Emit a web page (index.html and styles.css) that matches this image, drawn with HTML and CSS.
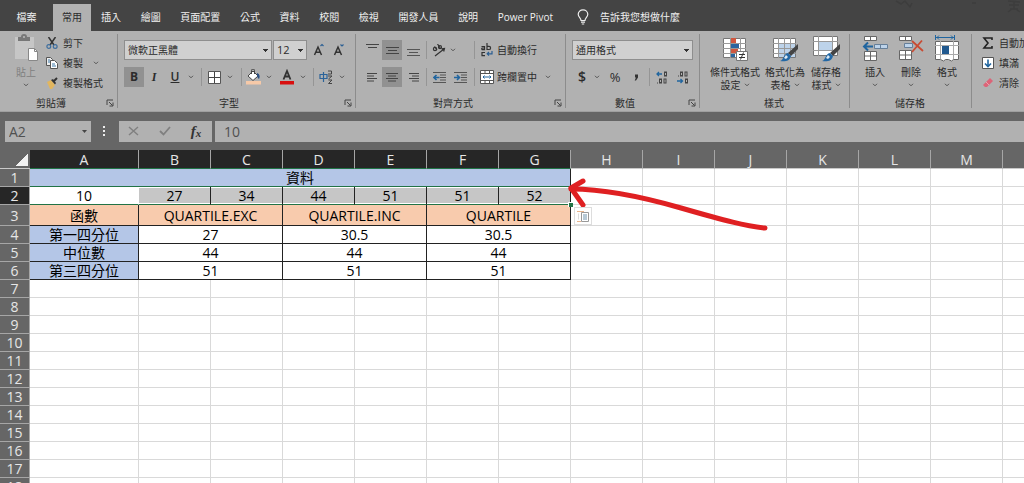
FILE: index.html
```html
<!DOCTYPE html>
<html lang="zh-Hant">
<head>
<meta charset="utf-8">
<title>Excel</title>
<link rel="stylesheet" href="styles.css">
</head>
<body>
<svg width="0" height="0" class="defs" aria-hidden="true">
  <symbol id="chev" viewBox="0 0 6 4"><path d="M1 .8 3 2.8 5 .8" fill="none" stroke="#555" stroke-width="1"/></symbol>
  <symbol id="launch" viewBox="0 0 8 8"><path d="M1 6V1h6M3 3l3.500 3.500M7 3.500V7H3.500" fill="none" stroke="#444" stroke-width="1"/></symbol>
</svg>
<header class="tabs">
  <button class="tab file">檔案</button>
  <button class="tab active">常用</button>
  <nav class="tablist">
    <button class="tab">插入</button><button class="tab">繪圖</button><button class="tab">頁面配置</button><button class="tab">公式</button><button class="tab">資料</button><button class="tab">校閱</button><button class="tab">檢視</button><button class="tab">開發人員</button><button class="tab">說明</button><button class="tab">Power Pivot</button>
  </nav>
  <button class="tab tell"><svg width="12" height="16" viewBox="0 0 12 16" fill="none" stroke="#eee" stroke-width="1.200"><path d="M4 11.500C4 9 1.200 8.300 1.200 5.300a4.800 4.500 0 0 1 9.600 0C10.800 8.300 8 9 8 11.500zM4 13.200h4M4.800 15h2.400"/></svg><span>告訴我您想做什麼</span></button>
  <svg class="deco" width="130" height="14" viewBox="0 0 130 14" fill="none" stroke="#3d3d3d" stroke-width="1.500"><path d="M2 1l5 3 4-3 5 6 2-4M78 3h4M114 1l12 1M115 5h10M116 9h8M120 1v8M114 12l4-3M126 12l-4-3"/></svg>
</header>

<main class="ribbon">
  <section class="group g-clip">
    <div class="body clip">
      <button class="big dim">
        <svg width="26" height="28" viewBox="0 0 26 28"><path d="M2 3h19v22H2z" fill="#c6c6c6"/><path d="M5 3h3a3 3 0 0 1 6 0h3v4H5z" fill="#777"/><circle cx="11" cy="3" r="1" fill="#bbb"/><path d="M15.500 14.500h6l3 3v9h-9z" fill="#fff" stroke="#888"/><path d="M21.500 14.500v3h3" fill="none" stroke="#888"/></svg>
        <span>貼上</span><svg width="6" height="4"><use href="#chev"/></svg>
      </button>
      <div class="stack">
        <button class="line"><svg width="12" height="12" viewBox="0 0 12 12" fill="none"><path d="M2.500 0 8 8M9.500 0 4 8" stroke="#333" stroke-width="1.500"/><circle cx="2.800" cy="9.500" r="1.900" stroke="#3f6f9f" stroke-width="1.200"/><circle cx="9.200" cy="9.500" r="1.900" stroke="#3f6f9f" stroke-width="1.200"/></svg>剪下</button>
        <button class="line"><svg width="12" height="12" viewBox="0 0 12 12"><path d="M.5.500h4l2 2v6h-6z" fill="#eee" stroke="#555"/><path d="M4.500 3.500h4l3 3v5h-7z" fill="#fff" stroke="#555"/><path d="M6 7h3M6 9h4M2 3h2M2 5h2" stroke="#3d78a8"/></svg>複製<svg class="far" width="6" height="4"><use href="#chev"/></svg></button>
        <button class="line"><svg width="12" height="12" viewBox="0 0 12 12"><path d="M1 5l4-2 4 5-3 4H4z" fill="#e2b65e"/><path d="M5 3l2-1 3 4-1 1.500z" fill="#333"/><path d="M8 4l3-3" stroke="#333" stroke-width="2"/></svg>複製格式</button>
      </div>
    </div>
    <footer><span>剪貼簿</span><svg width="8" height="8"><use href="#launch"/></svg></footer>
  </section>

  <section class="group g-font">
    <div class="body rows">
      <div class="row font1">
        <select class="box" aria-label="字型"><option>微軟正黑體</option></select>
        <select class="box" aria-label="大小"><option>12</option></select>
        <button class="tool letter" aria-label="放大字型"><svg width="12" height="14" viewBox="0 0 12 14" fill="none"><path d="M1.500 12 5 4l3.500 8M2.800 9.300h4.400" stroke="#333" stroke-width="1.500"/><path d="M7.500 3 9 1.500 10.500 3" stroke="#2b5f93" stroke-width="1.200"/></svg></button>
        <button class="tool letter" aria-label="縮小字型"><svg width="12" height="14" viewBox="0 0 12 14" fill="none"><path d="M1.500 12 5 4l3.500 8M2.800 9.300h4.400" stroke="#333" stroke-width="1.500"/><path d="M7.500 1.500 9 3l1.500-1.500" stroke="#2b5f93" stroke-width="1.200"/></svg></button>
      </div>
      <div class="row font2">
        <button class="tool on b">B</button><button class="tool i">I</button><button class="tool u">U</button>
        <svg width="6" height="4"><use href="#chev"/></svg><i class="sep"></i>
        <svg width="13" height="13" viewBox="0 0 13 13"><path d="M.5.500h12v12H.5z" fill="#fff" stroke="#555"/><path d="M6.500 1v11M1 6.500h11" stroke="#444"/></svg>
        <svg width="6" height="4"><use href="#chev"/></svg><i class="sep"></i>
        <svg width="15" height="16" viewBox="0 0 15 16"><path d="M2 7l5-5 5 5-5 4.500z" fill="#fff" stroke="#444"/><path d="M5.500 5V1.500a1.500 1.500 0 0 1 3 0V5" fill="none" stroke="#444"/><path d="M11 4c3 1 3 4 2 6-2-1-2-4-2-6" fill="#2b4f83"/><path d="M0 12h15v3.500H0z" fill="#f6c9a8"/></svg>
        <svg width="6" height="4"><use href="#chev"/></svg>
        <svg width="14" height="16" viewBox="0 0 14 16"><path d="M3.500 10.500 7 2l3.500 8.500M5 7.500h4" stroke="#333" stroke-width="1.800" fill="none"/><path d="M0 12h14v3.500H0z" fill="#d80f0f"/></svg>
        <svg width="6" height="4"><use href="#chev"/></svg><i class="sep"></i>
        <svg width="14" height="14" viewBox="0 0 14 14" fill="none"><path d="M1 4.500h7v4H1zM4.500 2v10" stroke="#2b6399" stroke-width="1.200"/><path d="M9 1h3.500v3H9M9 6h4L9.500 9M9.500 10H13l-3.500 3.500H13" stroke="#444"/></svg>
        <svg width="6" height="4"><use href="#chev"/></svg>
      </div>
    </div>
    <footer><span>字型</span><svg width="8" height="8"><use href="#launch"/></svg></footer>
  </section>

  <section class="group g-align">
    <div class="body rows">
      <div class="row align">
        <button class="tool" aria-label="靠上"><svg width="13" height="14" viewBox="0 0 13 14"><path d="M0 1.500h13M2 4.500h9" stroke="#444"/></svg></button>
        <button class="tool on" aria-label="置中"><svg width="13" height="14" viewBox="0 0 13 14"><path d="M0 4.500h13M2 7.500h9M0 10.500h13" stroke="#444"/></svg></button>
        <button class="tool" aria-label="靠下"><svg width="13" height="14" viewBox="0 0 13 14"><path d="M0 6.500h13M2 9.500h9M0 12.500h13" stroke="#555"/></svg></button>
        <i class="sep"></i>
        <svg width="14" height="13" viewBox="0 0 14 13" fill="none" stroke="#333" stroke-width="1.200"><circle cx="3" cy="5" r="1.600"/><path d="M2.500 2.500 5 6M5.500 0l3 4.500"/><circle cx="8" cy="3.200" r="1.500"/><path d="M3 12 12 5M9.500 4.800l3-.3-.8 3"/></svg>
        <svg class="start" width="6" height="4"><use href="#chev"/></svg>
        <i class="sep"></i>
        <svg width="14" height="14" viewBox="0 0 14 14" fill="none" stroke="#333" stroke-width="1.200"><path d="M1.500 3.500h3v3.200H2.200a1 1 0 0 1 0-1.700h2.300M7 0v6.500h2a1.500 1.500 0 0 0 0-3.200H7M5 9.500H2v3.200h3"/><path d="M12 8v2.800H7.500M9 9l-1.800 1.800L9 12.600" stroke="#2b5f93"/></svg>
        <span>自動換行</span>
      </div>
      <div class="row align">
        <button class="tool" aria-label="靠左"><svg width="11" height="9" viewBox="0 0 11 9"><path d="M0 .5h10M0 3h7M0 5.500h10M0 8h7" stroke="#444"/></svg></button>
        <button class="tool on" aria-label="水平置中"><svg width="12" height="9" viewBox="0 0 12 9"><path d="M0 .5h12M2 3h8M0 5.500h12M2 8h8" stroke="#444"/></svg></button>
        <button class="tool" aria-label="靠右"><svg width="11" height="9" viewBox="0 0 11 9"><path d="M1 .5h10M4 3h7M1 5.500h10M4 8h7" stroke="#444"/></svg></button>
        <i class="sep"></i>
        <svg width="13" height="11" viewBox="0 0 13 11"><path d="M0 .5h13M7 3h6M7 5.500h6M7 8h6M0 10.500h13" stroke="#555"/><path d="M6.500 5.500H1M3.500 3 1 5.500 3.500 8" stroke="#20659f" stroke-width="1.600" fill="none"/></svg>
        <svg width="13" height="11" viewBox="0 0 13 11"><path d="M0 .5h13M7 3h6M7 5.500h6M7 8h6M0 10.500h13" stroke="#555"/><path d="M0 5.500h5.500M3 3l2.500 2.500L3 8" stroke="#20659f" stroke-width="1.600" fill="none"/></svg>
        <i class="sep"></i>
        <svg width="14" height="14" viewBox="0 0 14 14"><path d="M.5.500h13v13H.5z" fill="#fff" stroke="#555"/><path d="M0 3.500h14M0 10.500h14M5 0v3.500M9.500 0v3.500M5 10.500V14M9.500 10.500V14" stroke="#555"/><path d="M3 7h8M4.500 5.500 3 7l1.500 1.500M9.500 5.500 11 7 9.500 8.500" fill="none" stroke="#20659f"/></svg>
        <span>跨欄置中</span><svg width="6" height="4"><use href="#chev"/></svg>
      </div>
    </div>
    <footer><span>對齊方式</span><svg width="8" height="8"><use href="#launch"/></svg></footer>
  </section>

  <section class="group g-num">
    <div class="body rows">
      <div class="row"><select class="box wide" aria-label="數值格式"><option>通用格式</option></select></div>
      <div class="row num2">
        <button class="tool sym strong">$</button><svg width="6" height="4"><use href="#chev"/></svg><button class="tool sym">%</button>
        <svg width="5" height="7" viewBox="0 0 5 7"><path d="M1 .5h3v3L2 6.500H.7L2 3.500H1z" fill="#333"/></svg>
        <i class="sep"></i>
        <svg width="12" height="13" viewBox="0 0 12 13" fill="none" stroke="#444"><rect x="8.500" y="1" width="2" height="4"/><path d="M1.500 11.500v1"/><rect x="3.500" y="8" width="2" height="4"/><rect x="8" y="8" width="2" height="4"/><path d="M6 3H1M3 1 1 3l2 2" stroke="#20659f" stroke-width="1.300"/></svg>
        <svg width="12" height="13" viewBox="0 0 12 13" fill="none" stroke="#444"><path d="M1.500 4.500v1"/><rect x="3.500" y="1" width="2" height="4"/><rect x="8" y="1" width="2" height="4"/><rect x="8.500" y="8" width="2" height="4"/><path d="M0 10h5M3.500 8l2 2-2 2" stroke="#20659f" stroke-width="1.300"/></svg>
      </div>
    </div>
    <footer><span>數值</span><svg width="8" height="8"><use href="#launch"/></svg></footer>
  </section>

  <section class="group g-style">
    <div class="body bigs">
      <button class="big">
        <svg width="26" height="28" viewBox="0 0 26 28"><path d="M1.500 4.500h22v19h-22z" fill="#fff" stroke="#777"/><path d="M1 9.500h23M1 14.500h23M1 19.500h23M8.500 4v20M18.500 4v20" stroke="#999"/><path d="M9 4h5v5H9zM9 15h7v4H9z" fill="#d0573f"/><path d="M9 10h8v4H9zM9 20h4v3H9z" fill="#2b659f"/><path d="M14.500 17.500h11v9h-11z" fill="#fff" stroke="#777"/><path d="M17 20.500h6M17 23.500h6M21.500 18.500l-3 7" stroke="#333"/></svg>
        <span>條件式格式</span><span>設定 <svg width="6" height="4"><use href="#chev"/></svg></span>
      </button>
      <button class="big">
        <svg width="26" height="28" viewBox="0 0 26 28"><path d="M1.500 4.500h22v19h-22z" fill="#fff" stroke="#777"/><path d="M7 9h16v14H7z" fill="#bdd3ea"/><path d="M1 9.500h23M1 14.500h23M1 19.500h23M6.500 4v20M12.500 4v20M18.500 4v20" stroke="#999"/><path d="M26 10v5l-7 7-3-3z" fill="#444"/><path d="M16 19l3 3c-1 5-6 6-11 5 4-1 3-7 8-8" fill="#2368a5"/><path d="M14 21l2 2-2 2-2-1z" fill="#dceaf5"/></svg>
        <span>格式化為</span><span>表格 <svg width="6" height="4"><use href="#chev"/></svg></span>
      </button>
      <button class="big">
        <svg width="28" height="28" viewBox="0 0 28 28"><path d="M1.500 2.500h24v19h-24z" fill="#fff" stroke="#777"/><path d="M1 7.500h25M1 16.500h25M6.500 2v20M20.500 2v20" stroke="#999"/><path d="M7 8h13v8H7z" fill="#bdd3ea"/><path d="M28 10v5l-7 7-3-3z" fill="#444"/><path d="M18 19l3 3c-1 5-6 6-11 5 4-1 3-7 8-8" fill="#2368a5"/><path d="M16 21l2 2-2 2-2-1z" fill="#dceaf5"/></svg>
        <span>儲存格</span><span>樣式 <svg width="6" height="4"><use href="#chev"/></svg></span>
      </button>
    </div>
    <footer><span>樣式</span></footer>
  </section>

  <section class="group g-cells">
    <div class="body bigs">
      <button class="big">
        <svg width="26" height="28" viewBox="0 0 26 28"><g fill="#fff" stroke="#666"><path d="M2.500 2.500h12v4h-12zM8.500 2.500v4M2.500 17.500h12v9h-12zM2.500 22h12M8.500 17.500v9"/></g><path d="M12.500 10.500h13v4h-13zM18.500 10.500v4" fill="#bdd3ea" stroke="#667f99"/><path d="M11 12.500H2M6 8.500l-4 4 4 4" fill="none" stroke="#20659f" stroke-width="2"/></svg>
        <span>插入</span><svg width="6" height="4"><use href="#chev"/></svg>
      </button>
      <button class="big">
        <svg width="26" height="28" viewBox="0 0 26 28"><g fill="#fff" stroke="#666"><path d="M1.500 2.500h12v4h-12zM7.500 2.500v4M1.500 16.500h12v9h-12zM1.500 21h12M7.500 16.500v9"/></g><path d="M6.500 9.500h8v4h-8z" fill="#bdd3ea" stroke="#667f99"/><path d="M14 7l11 10M24 6.500 14 18" stroke="#c94b33" stroke-width="1.800"/></svg>
        <span>刪除</span><svg width="6" height="4"><use href="#chev"/></svg>
      </button>
      <button class="big">
        <svg width="26" height="28" viewBox="0 0 26 28"><path d="M1.500 7.500h23v18h-5l-2 1.500-3-1.500h-3l-2 1.500-3-1.500h-5z" fill="#fff" stroke="#666"/><path d="M1 11.500h24M1 20.500h24M6.500 7v18M19.500 7v18" stroke="#aaa"/><path d="M8 12h7v8H8z" fill="#20598f"/><path d="M2 3.500h18M5 1.500l-2 2 2 2M17 1.500l2 2-2 2M1.500 1v5M20.500 1v5" fill="none" stroke="#20659f"/></svg>
        <span>格式</span><svg width="6" height="4"><use href="#chev"/></svg>
      </button>
    </div>
    <footer><span>儲存格</span></footer>
  </section>

  <section class="group g-edit">
    <div class="body stack">
      <button class="line"><svg width="12" height="12" viewBox="0 0 12 12"><path d="M10 3V1H2l4 5-4 5h8V9" fill="none" stroke="#222" stroke-width="1.600"/></svg>自動加總</button>
      <button class="line"><svg width="12" height="12" viewBox="0 0 12 12"><path d="M.5.500h11v11H.5z" fill="#fff" stroke="#555"/><path d="M6 2.500v7M3 6.500l3 3 3-3" fill="none" stroke="#20659f" stroke-width="1.600"/></svg>填滿<svg width="6" height="4"><use href="#chev"/></svg></button>
      <button class="line"><svg width="12" height="12" viewBox="0 0 12 12"><path d="M8 1l3 3-6 6H3L1 8z" fill="#dc6478"/><path d="M4 5l3 3" stroke="#f0a0ac"/></svg>清除<svg width="6" height="4"><use href="#chev"/></svg></button>
    </div>
  </section>
</main>

<div class="formula">
  <div class="namebox"><input aria-label="名稱方塊" value="A2"><svg width="5" height="3" viewBox="0 0 5 3"><path d="M0 0h5L2.500 3z" fill="#444"/></svg></div>
  <svg class="dots" width="3" height="10" viewBox="0 0 3 10" fill="#eee"><path d="M0 0h2v2H0zM0 4h2v2H0zM0 8h2v2H0z"/></svg>
  <div class="fxbox">
    <button class="tool" aria-label="取消"><svg width="11" height="10" viewBox="0 0 11 10"><path d="M1 1l9 8M10 1 1 9" stroke="#808080" stroke-width="1.500"/></svg></button>
    <button class="tool" aria-label="輸入"><svg width="12" height="10" viewBox="0 0 12 10"><path d="M1 5l3.500 3.500L11 1" fill="none" stroke="#808080" stroke-width="1.800"/></svg></button>
    <button class="tool fx"><i>f</i><sub>x</sub></button>
  </div>
  <input class="finput" aria-label="資料編輯列" value="10">
</div>

<div class="sheet">
  <table id="grid"></table>
  <svg class="ink" width="204" height="60" viewBox="0 0 204 60" fill="none" stroke="#df2022" stroke-width="5" stroke-linecap="round" stroke-linejoin="round"><path d="M5 14C35 14 70 20 115 33S180 51 199 53"/><path d="M17 6 5 13l12 17"/></svg>
  <i class="handle"></i>
  <button class="smart" aria-label="快速分析"><svg width="12" height="12" viewBox="0 0 12 12" fill="none"><path d="M4.500 2.500h7v9h-7z" fill="#fff" stroke="#999"/><path d="M6 5h4M6 7h4M6 9h4" stroke="#6f93ad"/><path d="M0 1.500h7M0 11.500h4" stroke="#e8b48c"/><path d="M1.500 3.500v6" stroke="#ddd"/></svg></button>
</div>
<script src="app.js"></script>
</body>
</html>
```

FILE: styles.css
```css
* { box-sizing: border-box; }
body {
  margin: 0;
  height: 100vh;
  overflow: hidden;
  display: flex;
  flex-direction: column;
  background: #666;
  color: #2b2b2b;
  font: 10px/12px "Open Sans", "Noto Sans CJK TC", sans-serif;
}
button, select, input { font: inherit; color: inherit; background: none; border: 0; padding: 0; margin: 0; border-radius: 0; outline: 0; }
svg { display: block; flex: none; }
.defs { position: absolute; }

.tabs { position: relative; display: flex; align-items: flex-end; flex: none; height: 31px; background: #444; color: #f0f0f0; }
.tab { height: 27px; padding-bottom: 2px; white-space: nowrap; }
.file { width: 53px; }
.active { width: 38px; background: #b1b1b1; color: #2b2b2b; }
.tablist { display: flex; justify-content: space-between; width: 452px; margin-left: 10px; }
.tell { display: flex; align-items: center; gap: 11px; margin-left: 24px; }
.deco { position: absolute; right: 0; top: 0; }

.ribbon { display: flex; flex: none; height: 81px; overflow: hidden; background: #b1b1b1; border-bottom: 1px solid #a0a0a0; }
.group { position: relative; flex: none; display: flex; flex-direction: column; padding-top: 3px; }
.group:not(.g-edit)::after { content: ""; position: absolute; right: 0; top: 3px; bottom: 3px; width: 1px; background: #8c8c8c; }
.g-clip { width: 118px; }
.g-font { width: 238px; }
.g-align { width: 210px; }
.g-num { width: 134px; }
.g-style { width: 150px; }
.g-cells { width: 122px; }
.g-edit { flex: 1 0 52px; padding-left: 10px; }
.body { height: 62px; }
.group footer { display: flex; align-items: center; gap: 4px; height: 14px; padding-right: 4px; }
.group footer span { flex: 1; text-align: center; }
.g-style footer, .g-cells footer { padding-right: 2px; }

.clip { display: flex; padding-left: 12px; }
.big { display: flex; flex-direction: column; align-items: center; white-space: nowrap; }
.big > span { display: flex; align-items: center; gap: 3px; height: 13px; }
.big > svg + span { margin-top: 3px; }
.big > svg:last-child { margin-top: 5px; }
.clip .big { width: 28px; }
.dim { color: #808080; }
.stack { display: flex; flex-direction: column; margin-top: -1px; }
.clip .stack { margin-left: 6px; }
.line { display: flex; align-items: center; gap: 5px; height: 20px; white-space: nowrap; }
.far { margin-left: 5px; }

.rows { display: flex; flex-direction: column; gap: 7px; padding: 6px 6px 0; }
.row { display: grid; height: 20px; align-items: center; justify-items: center; white-space: nowrap; }
.font1 { grid-template-columns: 149px 34px 24px 16px; justify-items: start; }
.font1 .letter { justify-self: center; }
.font2 { grid-template-columns: 20px 20px 22px 10px 11px 14px 18px 4px 20px 12px 24px 8px 12px 14px 18px; }
.align { grid-template-columns: 20px 20px 22px 4px 22px 20px 8px 18px 42px 20px; }
.num2 { grid-template-columns: 20px 10px 26px 16px 11px 14px 28px; }
.start { justify-self: start; }
.sep { width: 1px; height: 18px; background: #959595; }
.tool { display: flex; align-items: center; justify-content: center; width: 20px; height: 20px; }
.on { background: #919191; }
.b { font-size: 12px; font-weight: 700; }
.i { font: italic 700 12px "Liberation Serif", serif; }
.u { font-size: 12px; font-weight: 600; text-decoration: underline; }
.sym { font-size: 13px; }
.strong { font-size: 14px; font-weight: 600; }
.box {
  appearance: none;
  width: 148px;
  height: 20px;
  padding: 0 3px;
  border: 1px solid #8e8e8e;
  background-color: #d0d0d0;
  background-image: linear-gradient(#333, #333), linear-gradient(#333, #333), linear-gradient(#333, #333);
  background-repeat: no-repeat;
  background-size: 5px 1px, 3px 1px, 1px 1px;
  background-position: right 3px top 8px, right 4px top 9px, right 5px top 10px;
}
.font1 .box + .box { width: 34px; font-size: 11px; }
.row .wide { width: 121px; justify-self: start; }

.bigs { display: grid; }
.g-style .bigs { grid-template-columns: 54px 46px 36px; padding-left: 8px; }
.g-cells .bigs { grid-template-columns: 36px 36px 36px; padding-left: 7px; }

.formula { display: flex; align-items: center; flex: none; height: 38px; padding-left: 5px; font-size: 14px; color: #505050; }
.namebox { display: flex; align-items: center; width: 86px; height: 21px; padding: 0 4px; background: #b1b1b1; }
.namebox input { flex: 1; min-width: 0; }
.dots { margin: 0 13px 0 12px; }
.fxbox { display: flex; align-items: center; justify-content: space-between; width: 93px; height: 21px; padding: 0 6px 0 4px; background: #b1b1b1; }
.fx { font: italic 700 15px/20px "Liberation Serif", serif; color: #333; }
.fx sub { font-size: 11px; vertical-align: baseline; padding-top: 3px; }
.finput { flex: 1; height: 21px; margin-left: 3px; padding: 0 9px; background: #b1b1b1; }

.sheet { position: relative; flex: 1; min-height: 0; overflow: hidden; }
#grid { table-layout: fixed; width: 1075px; border-collapse: separate; border-spacing: 0; background: #fff; color: #000; font-size: 14px; line-height: 17px; }
.c-head { width: 30px; }
.c-a { width: 109px; }
#grid th, #grid td { height: 18px; padding: 0; font-weight: 400; text-align: center; border: 0 solid #d9d9d9; border-width: 0 1px 1px 0; white-space: nowrap; }
#grid th { background: #666; color: #e6e6e6; border-color: #a6a6a6; }
#grid thead th { height: 19px; border-bottom-color: #c9c9c9; }
#grid thead th.sel { background: #262626; border-bottom-color: #217346; }
#grid tbody th.sel { background: #262626; }
#grid .corner { background: linear-gradient(135deg, transparent 50%, #f2f2f2 50%) no-repeat right 2px bottom 2px / 12px 12px #666; border-right: 0; }
#grid .tall > * { height: 21px; }
#grid td.k { border-color: #222; }
#grid td.title { background: #b4c6e7; border-bottom-color: #217346; }
#grid td.picked { background: #c6c6c6; border-bottom-color: #217346; box-shadow: inset 0 1px #fff, inset 0 -1px #fff; }
#grid td.current { background: #fff; border-right-color: #fff; }
#grid td.orange { background: #f8cbad; }
#grid td.blue { background: #b4c6e7; }

.ink { position: absolute; left: 566px; top: 25px; }
.handle { position: absolute; left: 568px; top: 52px; width: 5px; height: 5px; background: #217346; border: 1px solid #fff; border-width: 1px 0 0 1px; }
.smart { position: absolute; left: 574px; top: 57px; width: 18px; height: 18px; display: flex; align-items: center; justify-content: center; background: #fff; border: 1px solid #ddd; }
```

FILE: app.js
```js
const columns = "ABCDEFGHIJKLMN".split("");
const rows = {
  1: [["資料", 7, "k title"]],
  2: [[10, 1, "k picked current"], ...[27, 34, 44, 51, 51, 52].map(v => [v, 1, "k picked"])],
  3: [["函數", 1, "k orange"], ["QUARTILE.EXC", 2, "k orange"], ["QUARTILE.INC", 2, "k orange"], ["QUARTILE", 2, "k orange"]],
  4: [["第一四分位", 1, "k blue"], [27, 2, "k"], [30.5, 2, "k"], [30.5, 2, "k"]],
  5: [["中位數", 1, "k blue"], [44, 2, "k"], [44, 2, "k"], [44, 2, "k"]],
  6: [["第三四分位", 1, "k blue"], [51, 2, "k"], [51, 2, "k"], [51, 2, "k"]]
};

let html = '<colgroup><col class="c-head"><col class="c-a">' + "<col>".repeat(13) + "</colgroup>";
html += '<thead><tr><th class="corner"></th>' +
  columns.map((c, i) => `<th class="${i < 7 ? "sel" : ""}">${i < 13 ? c : ""}</th>`).join("") + "</tr></thead><tbody>";
for (let r = 1; r <= 18; r++) {
  const cells = rows[r] || [];
  const used = cells.reduce((n, c) => n + c[1], 0);
  html += `<tr class="${r === 3 ? "tall" : ""}"><th class="${r === 2 ? "sel" : ""}">${r}</th>` +
    cells.map(([text, span, cls]) => `<td colspan="${span}" class="${cls}">${text}</td>`).join("") +
    "<td></td>".repeat(columns.length - used) + "</tr>";
}
document.getElementById("grid").innerHTML = html + "</tbody>";
```
